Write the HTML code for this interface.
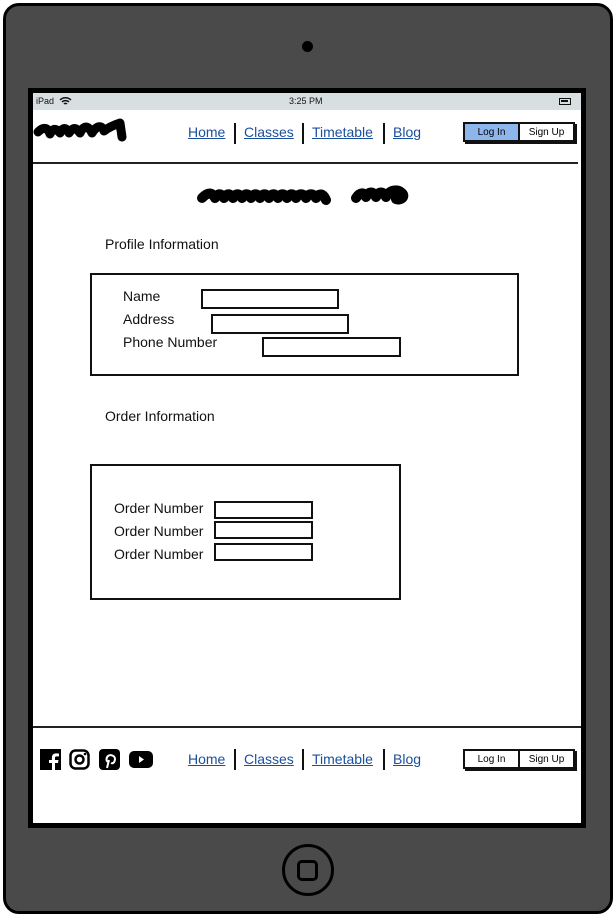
<!DOCTYPE html>
<html><head><meta charset="utf-8"><style>
*{margin:0;padding:0;box-sizing:border-box}
body{width:616px;height:916px;background:#fff;position:relative;overflow:hidden;font-family:"Liberation Sans",sans-serif}
.a{position:absolute}
.dev{left:3px;top:3px;width:610px;height:911px;background:#4a4a4a;border:3px solid #000;border-radius:16px}
.scr{left:28px;top:88px;width:558px;height:740px;background:#fff;border:5px solid #000}
.status{left:33px;top:93px;width:548px;height:17px;background:#d8dfe1;font-size:9px;color:#111}
.nav a{color:#1a4f9c;text-decoration:underline;font-size:14px;position:absolute}
.sep{position:absolute;width:2px;height:21px;background:#111}
.btns{position:absolute;width:112px;height:20px;border:2px solid #111;box-shadow:2px 2px 0 #111;font-size:10px;display:flex}
.btns div{flex:1;text-align:center;line-height:17px}
.lbl{position:absolute;font-size:14px;color:#111}
.box{position:absolute;border:2px solid #111;background:#fff}
</style></head><body>
<div class="a dev"></div>
<div class="a" style="left:302px;top:41px;width:11px;height:11px;border-radius:50%;background:#000"></div>
<div class="a" style="left:282px;top:844px;width:52px;height:52px;border-radius:50%;border:3px solid #000"></div>
<div class="a" style="left:297px;top:860px;width:21px;height:21px;border-radius:5px;border:3px solid #000"></div>
<div class="a scr"></div>
<div class="a status"><span class="a" style="left:3px;top:3px">iPad</span>
<svg class="a" style="left:26px;top:3px" width="13" height="10" viewBox="0 0 13 10"><path d="M1 4a8 8 0 0 1 11 0M3 6a5 5 0 0 1 7 0M5 8a2 2 0 0 1 3 0" stroke="#111" stroke-width="1.5" fill="none"/></svg>
<span class="a" style="left:256px;top:3px">3:25 PM</span>
<div class="a" style="left:526px;top:5px;width:12px;height:7px;border:1.5px solid #111;padding:1px"><div style="width:7px;height:2px;background:#111"></div></div></div>

<svg class="a" style="left:33px;top:116px" width="95" height="32" viewBox="0 0 95 32"><path d="M5 16c6-6 10-4 12 2 3-6 6-6 10-1 3-6 6-6 9 0 4-6 7-6 11 0 4-8 8-8 12 0 5-8 10-8 12-2 5-4 10-6 16-8l2 14" stroke="#000" stroke-width="9" fill="none" stroke-linejoin="round" stroke-linecap="round"/></svg>
<svg class="a" style="left:196px;top:183px" width="225" height="26" viewBox="0 0 225 26"><path d="M6 15c6-6 10-6 13 0 3-5 6-5 9 0 3-5 6-5 9 0 3-5 6-5 9 0 3-5 6-5 9 0 3-5 6-5 9 0 3-5 6-5 9 0 3-5 6-5 9 0 3-5 6-5 9 0 3-5 6-5 9 0 3-5 7-5 10 0 3-5 7-5 10 0 3-5 7-5 10 2M160 15c4-6 8-6 10-1 3-6 7-6 10 0 3-6 7-6 10 0 4-8 12-8 16-4 4 4-2 8-6 6" stroke="#000" stroke-width="10" fill="none" stroke-linejoin="round" stroke-linecap="round"/></svg>

<div class="nav">
<a style="left:188px;top:124px">Home</a><div class="sep" style="left:234px;top:123px"></div>
<a style="left:244px;top:124px">Classes</a><div class="sep" style="left:302px;top:123px"></div>
<a style="left:312px;top:124px">Timetable</a><div class="sep" style="left:383px;top:123px"></div>
<a style="left:393px;top:124px">Blog</a>
</div>
<div class="btns" style="left:463px;top:122px"><div style="background:#8fb6ec;border-right:2px solid #111">Log In</div><div>Sign Up</div></div>
<div class="a" style="left:33px;top:162px;width:545px;height:2px;background:#222"></div>

<div class="lbl" style="left:105px;top:236px">Profile Information</div>
<div class="box" style="left:90px;top:273px;width:429px;height:103px"></div>
<div class="lbl" style="left:123px;top:288px">Name</div>
<div class="lbl" style="left:123px;top:311px">Address</div>
<div class="lbl" style="left:123px;top:334px">Phone Number</div>
<div class="box" style="left:201px;top:289px;width:138px;height:20px"></div>
<div class="box" style="left:211px;top:314px;width:138px;height:20px"></div>
<div class="box" style="left:262px;top:337px;width:139px;height:20px"></div>

<div class="lbl" style="left:105px;top:408px">Order Information</div>
<div class="box" style="left:90px;top:464px;width:311px;height:136px"></div>
<div class="lbl" style="left:114px;top:500px">Order Number</div>
<div class="lbl" style="left:114px;top:523px">Order Number</div>
<div class="lbl" style="left:114px;top:546px">Order Number</div>
<div class="box" style="left:214px;top:501px;width:99px;height:18px"></div>
<div class="box" style="left:214px;top:521px;width:99px;height:18px"></div>
<div class="box" style="left:214px;top:543px;width:99px;height:18px"></div>

<div class="a" style="left:33px;top:726px;width:548px;height:2px;background:#222"></div>
<svg class="a" style="left:40px;top:749px" width="22" height="22" viewBox="0 0 22 22"><rect width="21" height="21" fill="#000"/><path d="M15 22v-8h3l.5-3H15V9c0-1 .4-1.6 1.7-1.6H19V4.6c-.5 0-1.6-.2-2.9-.2-2.6 0-4.2 1.6-4.2 4.4V11H9v3h3v8z" fill="#fff"/></svg>
<svg class="a" style="left:69px;top:749px" width="22" height="22" viewBox="0 0 22 22"><rect x="1.5" y="1.5" width="18" height="18" rx="5" stroke="#000" stroke-width="2.5" fill="none"/><circle cx="10.5" cy="10.5" r="4" stroke="#000" stroke-width="2.5" fill="none"/><circle cx="16" cy="5" r="1.3" fill="#000"/></svg>
<svg class="a" style="left:99px;top:749px" width="22" height="22" viewBox="0 0 22 22"><rect width="21" height="21" rx="4" fill="#000"/><path d="M8 19l2-8M9 13c-2-1-2-4 0-6 3-2 7 0 7 3s-2 5-4 4" stroke="#fff" stroke-width="2" fill="none"/></svg>
<svg class="a" style="left:129px;top:751px" width="25" height="18" viewBox="0 0 25 18"><rect width="24" height="17" rx="5" fill="#000"/><path d="M10 5v7l5-3.5z" fill="#fff"/></svg>
<div class="nav">
<a style="left:188px;top:751px">Home</a><div class="sep" style="left:234px;top:749px"></div>
<a style="left:244px;top:751px">Classes</a><div class="sep" style="left:302px;top:749px"></div>
<a style="left:312px;top:751px">Timetable</a><div class="sep" style="left:383px;top:749px"></div>
<a style="left:393px;top:751px">Blog</a>
</div>
<div class="btns" style="left:463px;top:749px"><div style="border-right:2px solid #111">Log In</div><div>Sign Up</div></div>
</body></html>
